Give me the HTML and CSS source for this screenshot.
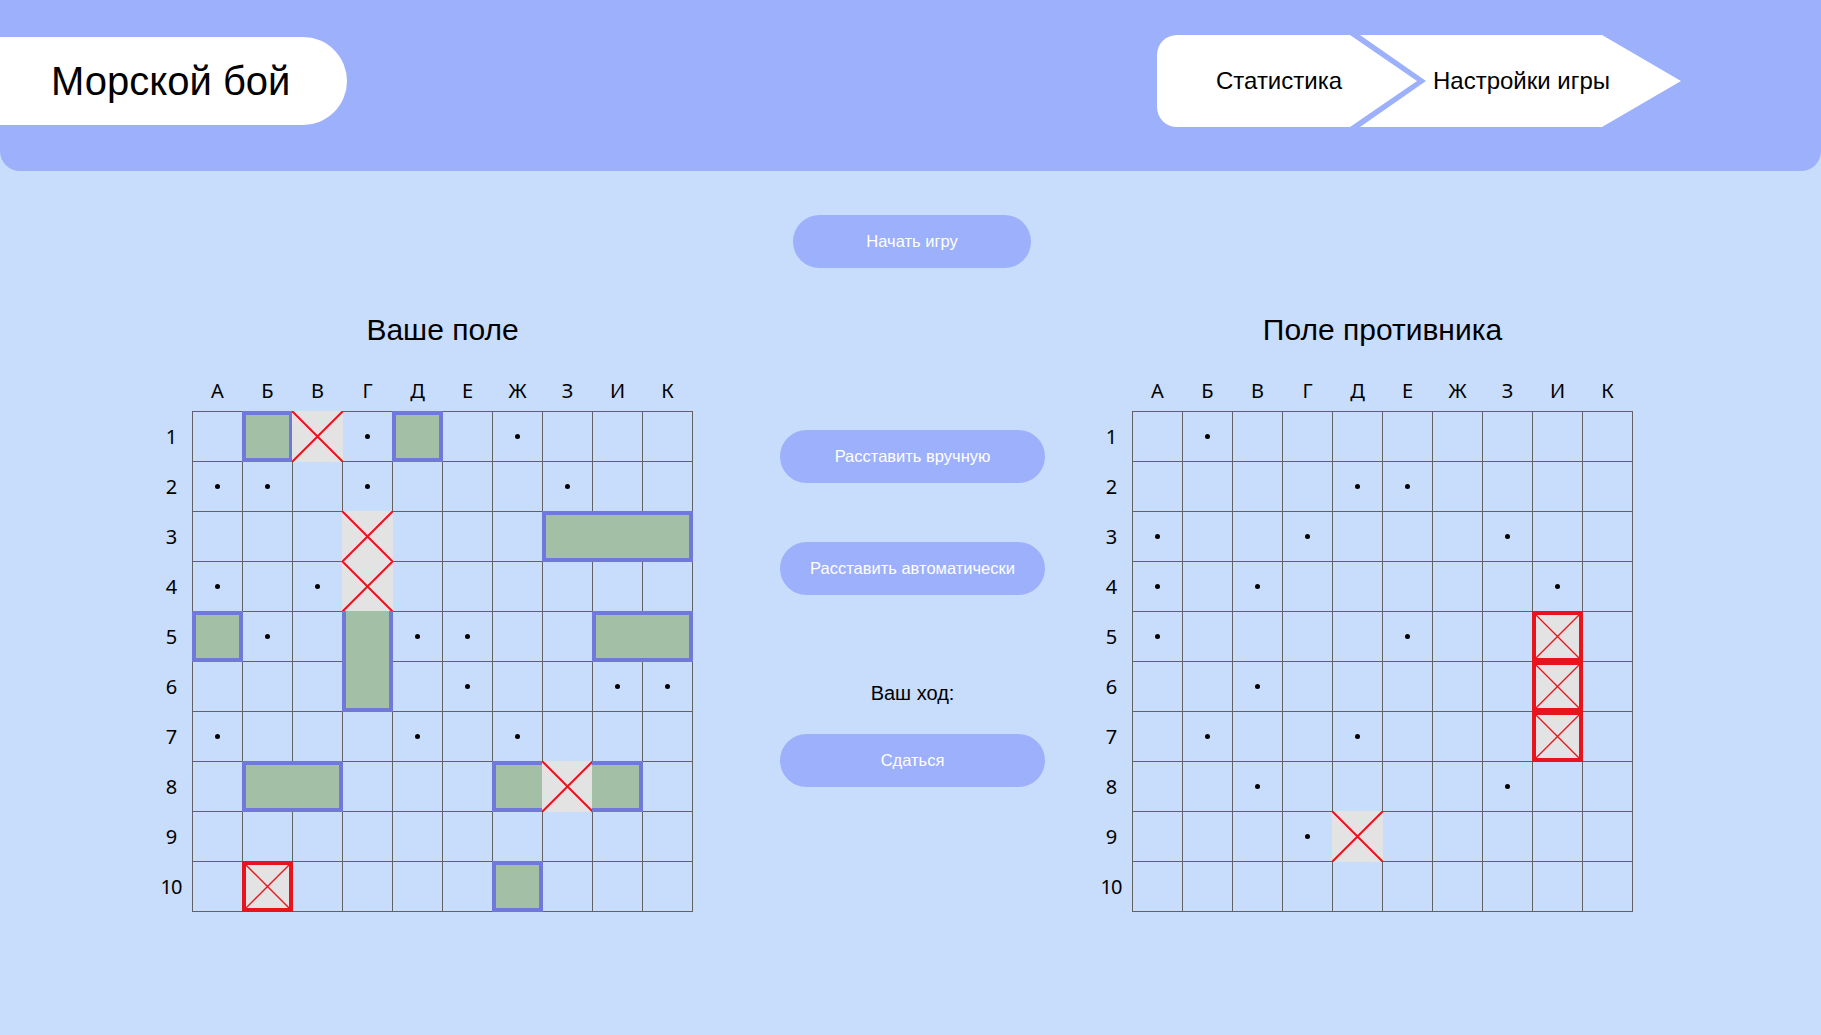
FILE: index.html
```html
<!DOCTYPE html>
<html lang="ru">
<head>
<meta charset="utf-8">
<title>Морской бой</title>
<link rel="stylesheet" href="styles.css">
</head>
<body>
<header class="header">
  <div class="logo">Морской бой</div>
  <nav class="nav">
    <a class="nav-item nav-first">Статистика</a>
    <a class="nav-item nav-second">Настройки игры</a>
  </nav>
</header>

<main class="main">
  <button class="btn btn-start">Начать игру</button>

  <div class="play">
    <section class="board">
      <h2 class="board-title">Ваше поле</h2>
      <div class="board-body">
        <div class="corner"></div>
        <div class="cols"><span>А</span><span>Б</span><span>В</span><span>Г</span><span>Д</span><span>Е</span><span>Ж</span><span>З</span><span>И</span><span>К</span></div>
        <div class="rows"><span>1</span><span>2</span><span>3</span><span>4</span><span>5</span><span>6</span><span>7</span><span>8</span><span>9</span><span>10</span></div>
        <div class="grid">
          <!-- 1 -->
          <div class="cell"></div>
          <div class="cell ship t r b l"></div>
          <div class="cell hit"><svg class="x" viewBox="0 0 51 51" preserveAspectRatio="none"><path d="M0 0L51 51M51 0L0 51"/></svg></div>
          <div class="cell miss"></div>
          <div class="cell ship t r b l"></div>
          <div class="cell"></div>
          <div class="cell miss"></div>
          <div class="cell"></div>
          <div class="cell"></div>
          <div class="cell"></div>
          <!-- 2 -->
          <div class="cell miss"></div>
          <div class="cell miss"></div>
          <div class="cell"></div>
          <div class="cell miss"></div>
          <div class="cell"></div>
          <div class="cell"></div>
          <div class="cell"></div>
          <div class="cell miss"></div>
          <div class="cell"></div>
          <div class="cell"></div>
          <!-- 3 -->
          <div class="cell"></div>
          <div class="cell"></div>
          <div class="cell"></div>
          <div class="cell hit"><svg class="x" viewBox="0 0 51 51" preserveAspectRatio="none"><path d="M0 0L51 51M51 0L0 51"/></svg></div>
          <div class="cell"></div>
          <div class="cell"></div>
          <div class="cell"></div>
          <div class="cell ship t b l"></div>
          <div class="cell ship t b"></div>
          <div class="cell ship t r b"></div>
          <!-- 4 -->
          <div class="cell miss"></div>
          <div class="cell"></div>
          <div class="cell miss"></div>
          <div class="cell hit"><svg class="x" viewBox="0 0 51 51" preserveAspectRatio="none"><path d="M0 0L51 51M51 0L0 51"/></svg></div>
          <div class="cell"></div>
          <div class="cell"></div>
          <div class="cell"></div>
          <div class="cell"></div>
          <div class="cell"></div>
          <div class="cell"></div>
          <!-- 5 -->
          <div class="cell ship t r b l"></div>
          <div class="cell miss"></div>
          <div class="cell"></div>
          <div class="cell ship r l"></div>
          <div class="cell miss"></div>
          <div class="cell miss"></div>
          <div class="cell"></div>
          <div class="cell"></div>
          <div class="cell ship t b l"></div>
          <div class="cell ship t r b"></div>
          <!-- 6 -->
          <div class="cell"></div>
          <div class="cell"></div>
          <div class="cell"></div>
          <div class="cell ship r b l"></div>
          <div class="cell"></div>
          <div class="cell miss"></div>
          <div class="cell"></div>
          <div class="cell"></div>
          <div class="cell miss"></div>
          <div class="cell miss"></div>
          <!-- 7 -->
          <div class="cell miss"></div>
          <div class="cell"></div>
          <div class="cell"></div>
          <div class="cell"></div>
          <div class="cell miss"></div>
          <div class="cell"></div>
          <div class="cell miss"></div>
          <div class="cell"></div>
          <div class="cell"></div>
          <div class="cell"></div>
          <!-- 8 -->
          <div class="cell"></div>
          <div class="cell ship t b l"></div>
          <div class="cell ship t r b"></div>
          <div class="cell"></div>
          <div class="cell"></div>
          <div class="cell"></div>
          <div class="cell ship t b l"></div>
          <div class="cell hit"><svg class="x" viewBox="0 0 51 51" preserveAspectRatio="none"><path d="M0 0L51 51M51 0L0 51"/></svg></div>
          <div class="cell ship t r b"></div>
          <div class="cell"></div>
          <!-- 9 -->
          <div class="cell"></div>
          <div class="cell"></div>
          <div class="cell"></div>
          <div class="cell"></div>
          <div class="cell"></div>
          <div class="cell"></div>
          <div class="cell"></div>
          <div class="cell"></div>
          <div class="cell"></div>
          <div class="cell"></div>
          <!-- 10 -->
          <div class="cell"></div>
          <div class="cell kill"><svg class="x" viewBox="0 0 51 51" preserveAspectRatio="none"><path d="M0 0L51 51M51 0L0 51"/></svg></div>
          <div class="cell"></div>
          <div class="cell"></div>
          <div class="cell"></div>
          <div class="cell"></div>
          <div class="cell ship t r b l"></div>
          <div class="cell"></div>
          <div class="cell"></div>
          <div class="cell"></div>
        </div>
      </div>
    </section>

    <aside class="controls">
      <button class="btn btn-wide">Расставить вручную</button>
      <button class="btn btn-wide btn-auto">Расставить автоматически</button>
      <p class="turn">Ваш ход:</p>
      <button class="btn btn-wide">Сдаться</button>
    </aside>

    <section class="board board-enemy">
      <h2 class="board-title">Поле противника</h2>
      <div class="board-body">
        <div class="corner"></div>
        <div class="cols"><span>А</span><span>Б</span><span>В</span><span>Г</span><span>Д</span><span>Е</span><span>Ж</span><span>З</span><span>И</span><span>К</span></div>
        <div class="rows"><span>1</span><span>2</span><span>3</span><span>4</span><span>5</span><span>6</span><span>7</span><span>8</span><span>9</span><span>10</span></div>
        <div class="grid">
          <!-- 1 -->
          <div class="cell"></div>
          <div class="cell miss"></div>
          <div class="cell"></div>
          <div class="cell"></div>
          <div class="cell"></div>
          <div class="cell"></div>
          <div class="cell"></div>
          <div class="cell"></div>
          <div class="cell"></div>
          <div class="cell"></div>
          <!-- 2 -->
          <div class="cell"></div>
          <div class="cell"></div>
          <div class="cell"></div>
          <div class="cell"></div>
          <div class="cell miss"></div>
          <div class="cell miss"></div>
          <div class="cell"></div>
          <div class="cell"></div>
          <div class="cell"></div>
          <div class="cell"></div>
          <!-- 3 -->
          <div class="cell miss"></div>
          <div class="cell"></div>
          <div class="cell"></div>
          <div class="cell miss"></div>
          <div class="cell"></div>
          <div class="cell"></div>
          <div class="cell"></div>
          <div class="cell miss"></div>
          <div class="cell"></div>
          <div class="cell"></div>
          <!-- 4 -->
          <div class="cell miss"></div>
          <div class="cell"></div>
          <div class="cell miss"></div>
          <div class="cell"></div>
          <div class="cell"></div>
          <div class="cell"></div>
          <div class="cell"></div>
          <div class="cell"></div>
          <div class="cell miss"></div>
          <div class="cell"></div>
          <!-- 5 -->
          <div class="cell miss"></div>
          <div class="cell"></div>
          <div class="cell"></div>
          <div class="cell"></div>
          <div class="cell"></div>
          <div class="cell miss"></div>
          <div class="cell"></div>
          <div class="cell"></div>
          <div class="cell kill"><svg class="x" viewBox="0 0 51 51" preserveAspectRatio="none"><path d="M0 0L51 51M51 0L0 51"/></svg></div>
          <div class="cell"></div>
          <!-- 6 -->
          <div class="cell"></div>
          <div class="cell"></div>
          <div class="cell miss"></div>
          <div class="cell"></div>
          <div class="cell"></div>
          <div class="cell"></div>
          <div class="cell"></div>
          <div class="cell"></div>
          <div class="cell kill"><svg class="x" viewBox="0 0 51 51" preserveAspectRatio="none"><path d="M0 0L51 51M51 0L0 51"/></svg></div>
          <div class="cell"></div>
          <!-- 7 -->
          <div class="cell"></div>
          <div class="cell miss"></div>
          <div class="cell"></div>
          <div class="cell"></div>
          <div class="cell miss"></div>
          <div class="cell"></div>
          <div class="cell"></div>
          <div class="cell"></div>
          <div class="cell kill"><svg class="x" viewBox="0 0 51 51" preserveAspectRatio="none"><path d="M0 0L51 51M51 0L0 51"/></svg></div>
          <div class="cell"></div>
          <!-- 8 -->
          <div class="cell"></div>
          <div class="cell"></div>
          <div class="cell miss"></div>
          <div class="cell"></div>
          <div class="cell"></div>
          <div class="cell"></div>
          <div class="cell"></div>
          <div class="cell miss"></div>
          <div class="cell"></div>
          <div class="cell"></div>
          <!-- 9 -->
          <div class="cell"></div>
          <div class="cell"></div>
          <div class="cell"></div>
          <div class="cell miss"></div>
          <div class="cell hit"><svg class="x" viewBox="0 0 51 51" preserveAspectRatio="none"><path d="M0 0L51 51M51 0L0 51"/></svg></div>
          <div class="cell"></div>
          <div class="cell"></div>
          <div class="cell"></div>
          <div class="cell"></div>
          <div class="cell"></div>
          <!-- 10 -->
          <div class="cell"></div>
          <div class="cell"></div>
          <div class="cell"></div>
          <div class="cell"></div>
          <div class="cell"></div>
          <div class="cell"></div>
          <div class="cell"></div>
          <div class="cell"></div>
          <div class="cell"></div>
          <div class="cell"></div>
        </div>
      </div>
    </section>
  </div>
</main>
</body>
</html>
```

FILE: styles.css
```css
* { box-sizing: border-box; }

html, body {
  margin: 0;
  padding: 0;
}

body {
  background: #c8dcfc;
  font-family: "Liberation Sans", Arial, sans-serif;
  color: #000;
  min-height: 1035px;
}

/* Header */
.header {
  height: 171px;
  background: #9db0fb;
  border-radius: 0 0 20px 20px;
  display: flex;
  justify-content: space-between;
  align-items: flex-start;
}

.logo {
  margin-top: 37px;
  height: 88px;
  width: 347px;
  background: #fff;
  border-radius: 0 44px 44px 0;
  padding-left: 51px;
  font-size: 40px;
  line-height: 88px;
  white-space: nowrap;
}

.nav {
  margin-top: 35px;
  margin-right: 140px;
  display: flex;
}

.nav-item {
  display: block;
  height: 92px;
  background: #fff;
  font-size: 24px;
  line-height: 92px;
  color: #000;
  white-space: nowrap;
}

.nav-first {
  width: 260px;
  padding-left: 59px;
  border-radius: 20px 0 0 20px;
  clip-path: polygon(0 0, 193px 0, 260px 46px, 193px 92px, 0 92px);
}

.nav-second {
  width: 321px;
  margin-left: -57px;
  padding-left: 73px;
  clip-path: polygon(0 0, 242px 0, 321px 46px, 242px 92px, 0 92px, 66px 46px);
}

/* Main */
.main {
  display: flex;
  flex-direction: column;
}

.btn {
  border: none;
  background: #9db0fb;
  color: #fff;
  font-family: "Liberation Sans", Arial, sans-serif;
  font-size: 16.5px;
  height: 53px;
  border-radius: 27px;
  padding: 0;
  cursor: pointer;
}

.btn-start {
  align-self: center;
  width: 238px;
  margin-top: 44px;
  margin-left: 3px;
}

.play {
  margin-top: 44px;
  padding-left: 150px;
  display: flex;
  align-items: flex-start;
}

.board-title {
  margin: 0 0 23px 42px;
  width: 501px;
  text-align: center;
  font-weight: normal;
  font-size: 30px;
  line-height: 36px;
}

.board-body {
  display: grid;
  grid-template-columns: 42px 501px;
  grid-template-rows: 40px 501px;
}

.cols {
  display: grid;
  grid-template-columns: repeat(10, 49px);
  column-gap: 1px;
  padding: 0 1px;
  align-items: center;
  text-align: center;
  font-family: "Noto Sans", sans-serif;
  font-size: 20px;
  line-height: 24px;
}

.rows {
  display: grid;
  grid-template-rows: repeat(10, 49px);
  row-gap: 1px;
  padding: 1px 0;
  text-align: center;
  font-family: "Noto Sans", sans-serif;
  font-size: 20px;
  letter-spacing: -1px;
}

.rows span {
  display: flex;
  align-items: center;
  justify-content: center;
}

.grid {
  display: grid;
  grid-template-columns: repeat(10, 49px);
  grid-template-rows: repeat(10, 49px);
  gap: 1px;
  padding: 1px;
  background: #626262;
}

.cell {
  position: relative;
  background: #c8dcfc;
}

.miss::after {
  content: "";
  position: absolute;
  left: 50%;
  top: 50%;
  width: 5px;
  height: 5px;
  margin: -2.5px 0 0 -2.5px;
  border-radius: 50%;
  background: #000;
}

.ship::before {
  content: "";
  position: absolute;
  inset: -1px;
  background: #a3c0a6;
  border: 0 solid #7078da;
}
.ship.t::before { border-top-width: 4px; }
.ship.r::before { border-right-width: 4px; }
.ship.b::before { border-bottom-width: 4px; }
.ship.l::before { border-left-width: 4px; }

.x {
  position: absolute;
  left: -1px;
  top: -1px;
  width: 51px;
  height: 51px;
  display: block;
  background: #e3e3e3;
}

.x path {
  stroke: #e8141c;
  stroke-width: 2;
  fill: none;
}

.kill .x {
  border: 4px solid #e8141c;
}

.kill .x path {
  stroke-width: 1.6;
}

/* Controls */
.controls {
  width: 265px;
  margin-left: 87px;
  margin-right: 45px;
  margin-top: 118px;
  display: flex;
  flex-direction: column;
}

.btn-wide {
  width: 265px;
}

.btn-auto {
  margin-top: 59px;
}

.turn {
  margin: 87px 0 0;
  text-align: center;
  font-size: 20px;
  line-height: 23px;
}

.turn + .btn {
  margin-top: 29px;
}
```
